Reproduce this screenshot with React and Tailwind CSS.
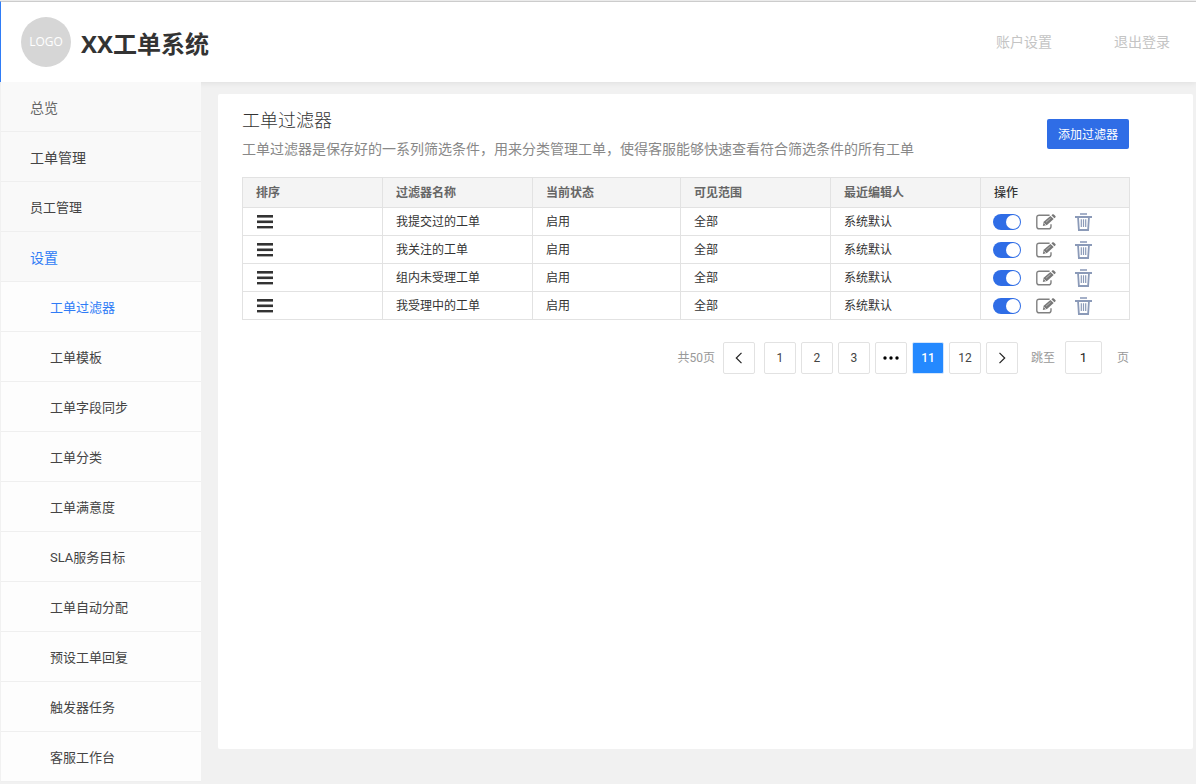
import React, { useState } from "react";

const topMenu = [
  { label: "总览", color: "text-[#666]", size: "text-[14px]" },
  { label: "工单管理", color: "text-[#444]", size: "text-[14px]" },
  { label: "员工管理", color: "text-[#444]", size: "text-[13px]" },
  { label: "设置", color: "text-[#2f7cf6]", size: "text-[14px]" },
];

const subMenu = [
  "工单过滤器",
  "工单模板",
  "工单字段同步",
  "工单分类",
  "工单满意度",
  "SLA服务目标",
  "工单自动分配",
  "预设工单回复",
  "触发器任务",
  "客服工作台",
];

const columns = ["排序", "过滤器名称", "当前状态", "可见范围", "最近编辑人"];
const filters = ["我提交过的工单", "我关注的工单", "组内未受理工单", "我受理中的工单"];

function DragIcon() {
  return (
    <svg width="16" height="14" viewBox="0 0 16 14" fill="#333" aria-hidden="true">
      <rect y="0" width="16" height="2.6" />
      <rect y="5.5" width="16" height="2.6" />
      <rect y="11" width="16" height="2.4" />
    </svg>
  );
}

function EditIcon() {
  return (
    <svg width="20" height="16" viewBox="0 0 20 16" fill="none" aria-hidden="true">
      <path
        d="M13.6 1.2H3.2Q0.8 1.2 0.8 3.6V12.4Q0.8 14.8 3.2 14.8H12.6Q15 14.8 15 12.4V10.2"
        stroke="#808080"
        strokeWidth="1.4"
      />
      <path d="M6.8 12.1L7.7 7.8L14.4 1.9L17.7 5L11 11.1Z" fill="#777" />
      <path d="M15.4 1.2L16.6 0.3Q17.3 -0.1 17.9 0.5L19.4 2.1Q20 2.7 19.3 3.4L18.4 4.2Z" fill="#777" />
      <path d="M10 8.2L14.6 4.2" stroke="#ddd" strokeWidth="0.6" />
      <path d="M8.3 9.4L9.7 10.8" stroke="#fff" strokeWidth="0.9" />
    </svg>
  );
}

function TrashIcon() {
  return (
    <svg width="17" height="18" viewBox="0 0 17 18" fill="none" aria-hidden="true">
      <path d="M5 1H12" stroke="#a5b0c8" strokeWidth="2" />
      <path d="M0 4H17" stroke="#8b9ab8" strokeWidth="2" />
      <path d="M3.1 5L3.9 17H13.1L13.9 5" stroke="#8b9ab8" strokeWidth="1.8" />
      <path d="M6.3 6.2V14M8.5 6.2V14M10.7 6.2V14" stroke="#8b9ab8" strokeWidth="1.2" />
    </svg>
  );
}

function Toggle({ label }) {
  return (
    <label className="relative block h-4 w-7 cursor-pointer">
      <input type="checkbox" defaultChecked aria-label={label} className="peer sr-only" />
      <span className="block h-4 w-7 rounded-full bg-[#bbb] peer-checked:bg-[#2f6de6]" />
      <span className="absolute left-px top-px size-3.5 rounded-full bg-white peer-checked:left-[13px]" />
    </label>
  );
}

const pageButton =
  "flex size-8 shrink-0 items-center justify-center rounded-[2px] border border-[#e2e2e2] bg-white text-[12px] leading-4 text-[#444]";

function Chevron({ d }) {
  return (
    <svg width="8" height="12" viewBox="0 0 8 12" fill="none" stroke="#222" strokeWidth="1.2" aria-hidden="true">
      <path d={d} />
    </svg>
  );
}

function Pagination() {
  const [target, setTarget] = useState("1");
  return (
    <nav aria-label="分页" className="mr-px mt-[21px] flex items-center justify-end text-[12px] text-[#999]">
      <span className="mr-2">共50页</span>
      <button type="button" aria-label="上一页" className={pageButton}>
        <Chevron d="M6.5 0.8L1.3 6L6.5 11.2" />
      </button>
      <div className="ml-[9px] flex items-center gap-[5px]">
        <button type="button" className={pageButton}>1</button>
        <button type="button" className={pageButton}>2</button>
        <button type="button" className={pageButton}>3</button>
        <button type="button" aria-label="更多" className={pageButton}>
          <svg width="16" height="4" viewBox="0 0 16 4" fill="#000" aria-hidden="true">
            <circle cx="2" cy="2" r="1.7" />
            <circle cx="8" cy="2" r="1.7" />
            <circle cx="14" cy="2" r="1.7" />
          </svg>
        </button>
        <button
          type="button"
          aria-current="page"
          className="flex size-8 shrink-0 items-center justify-center rounded-[2px] border border-[#d5e6fb] bg-[#2489ff] text-[12px] font-medium leading-4 text-white"
        >
          11
        </button>
        <button type="button" className={pageButton}>12</button>
        <button type="button" aria-label="下一页" className={pageButton}>
          <Chevron d="M1.5 0.8L6.7 6L1.5 11.2" />
        </button>
      </div>
      <label htmlFor="jump" className="ml-[13px]">跳至</label>
      <input
        id="jump"
        value={target}
        onChange={(e) => setTarget(e.target.value)}
        className="ml-2.5 mr-[15px] h-[33px] w-[37px] rounded-[2px] border border-[#e2e2e2] text-center text-[13px] text-[#222] outline-none"
      />
      <span>页</span>
    </nav>
  );
}

export default function App() {
  return (
    <div className="flex min-h-screen flex-col bg-[#f1f1f1] font-['Roboto','Noto_Sans_CJK_SC',sans-serif] text-[#333]">
      <header className="z-10 mt-px flex h-[81px] items-center border-l border-t border-l-[#2f7cf6] border-t-[#ccc] bg-white pl-5 pr-[26px] shadow-[0_1px_6px_rgba(0,0,0,0.08)]">
        <div className="flex size-[50px] items-center justify-center rounded-full bg-[#d6d6d6] font-['Open_Sans',sans-serif] text-[12px] text-white">
          LOGO
        </div>
        <h1 className="ml-2.5 mt-1 font-['Open_Sans','Noto_Sans_CJK_SC',sans-serif] text-[24px] font-bold leading-8">
          XX工单系统
        </h1>
        <nav className="ml-auto flex gap-[62px] text-[14px] leading-5 text-[#c4c4c4]">
          <a href="#account">账户设置</a>
          <a href="#logout">退出登录</a>
        </nav>
      </header>

      <div className="flex flex-1 items-start">
        <nav className="z-20 ml-px w-[200px] shrink-0 leading-5">
          {topMenu.map((item) => (
            <a
              key={item.label}
              href="#menu"
              className={`flex h-[50px] items-center border-b border-[#efefef] bg-[#f9f9f9] pl-[29px] pt-0.5 ${item.color} ${item.size}`}
            >
              {item.label}
            </a>
          ))}
          {subMenu.map((label, i) => (
            <a
              key={label}
              href="#menu"
              className={`flex h-[50px] items-center border-b border-[#efefef] bg-[#fdfdfd] pl-[49px] pt-0.5 text-[13px] ${
                i === 0 ? "text-[#2f7cf6]" : "text-[#444]"
              }`}
            >
              {label}
            </a>
          ))}
        </nav>

        <main className="ml-[17px] mr-[3px] mt-3 min-h-[655px] flex-1 rounded-[2px] bg-white pl-6 pr-[63px] pt-[14px]">
          <div className="flex items-start justify-between">
            <div>
              <h2 className="text-[18px] font-light leading-[26px]">工单过滤器</h2>
              <p className="mt-1 text-[14px] leading-[22px] text-[#888]">
                工单过滤器是保存好的一系列筛选条件，用来分类管理工单，使得客服能够快速查看符合筛选条件的所有工单
              </p>
            </div>
            <button
              type="button"
              className="mr-px mt-[11px] h-[30px] w-[82px] rounded-[2px] bg-[#2f6de6] pt-0.5 text-[12px] text-white"
            >
              添加过滤器
            </button>
          </div>

          <table className="mt-[17px] w-full table-fixed border-collapse text-left text-[12px] leading-4">
            <colgroup>
              <col className="w-[140px]" />
              <col className="w-[150px]" />
              <col className="w-[148px]" />
              <col className="w-[150px]" />
              <col className="w-[150px]" />
              <col />
            </colgroup>
            <thead>
              <tr className="h-[30px] bg-[#f4f4f4]">
                {columns.map((c) => (
                  <th key={c} className="border border-[#e2e2e2] px-[13px] py-0 font-bold text-[#666]">
                    {c}
                  </th>
                ))}
                <th className="border border-[#e2e2e2] px-[13px] py-0 font-medium text-[#333]">操作</th>
              </tr>
            </thead>
            <tbody>
              {filters.map((name) => (
                <tr key={name} className="h-7">
                  <td className="border border-[#e2e2e2] px-[14px] py-0">
                    <DragIcon />
                  </td>
                  <td className="border border-[#e2e2e2] px-[13px] py-0">{name}</td>
                  <td className="border border-[#e2e2e2] px-[13px] py-0">启用</td>
                  <td className="border border-[#e2e2e2] px-[13px] py-0">全部</td>
                  <td className="border border-[#e2e2e2] px-[13px] py-0">系统默认</td>
                  <td className="border border-[#e2e2e2] px-3 py-0">
                    <div className="flex items-center">
                      <Toggle label={`启用${name}`} />
                      <button type="button" aria-label="编辑" className="ml-[15px]">
                        <EditIcon />
                      </button>
                      <button type="button" aria-label="删除" className="ml-[19px]">
                        <TrashIcon />
                      </button>
                    </div>
                  </td>
                </tr>
              ))}
            </tbody>
          </table>

          <Pagination />
        </main>
      </div>
    </div>
  );
}
